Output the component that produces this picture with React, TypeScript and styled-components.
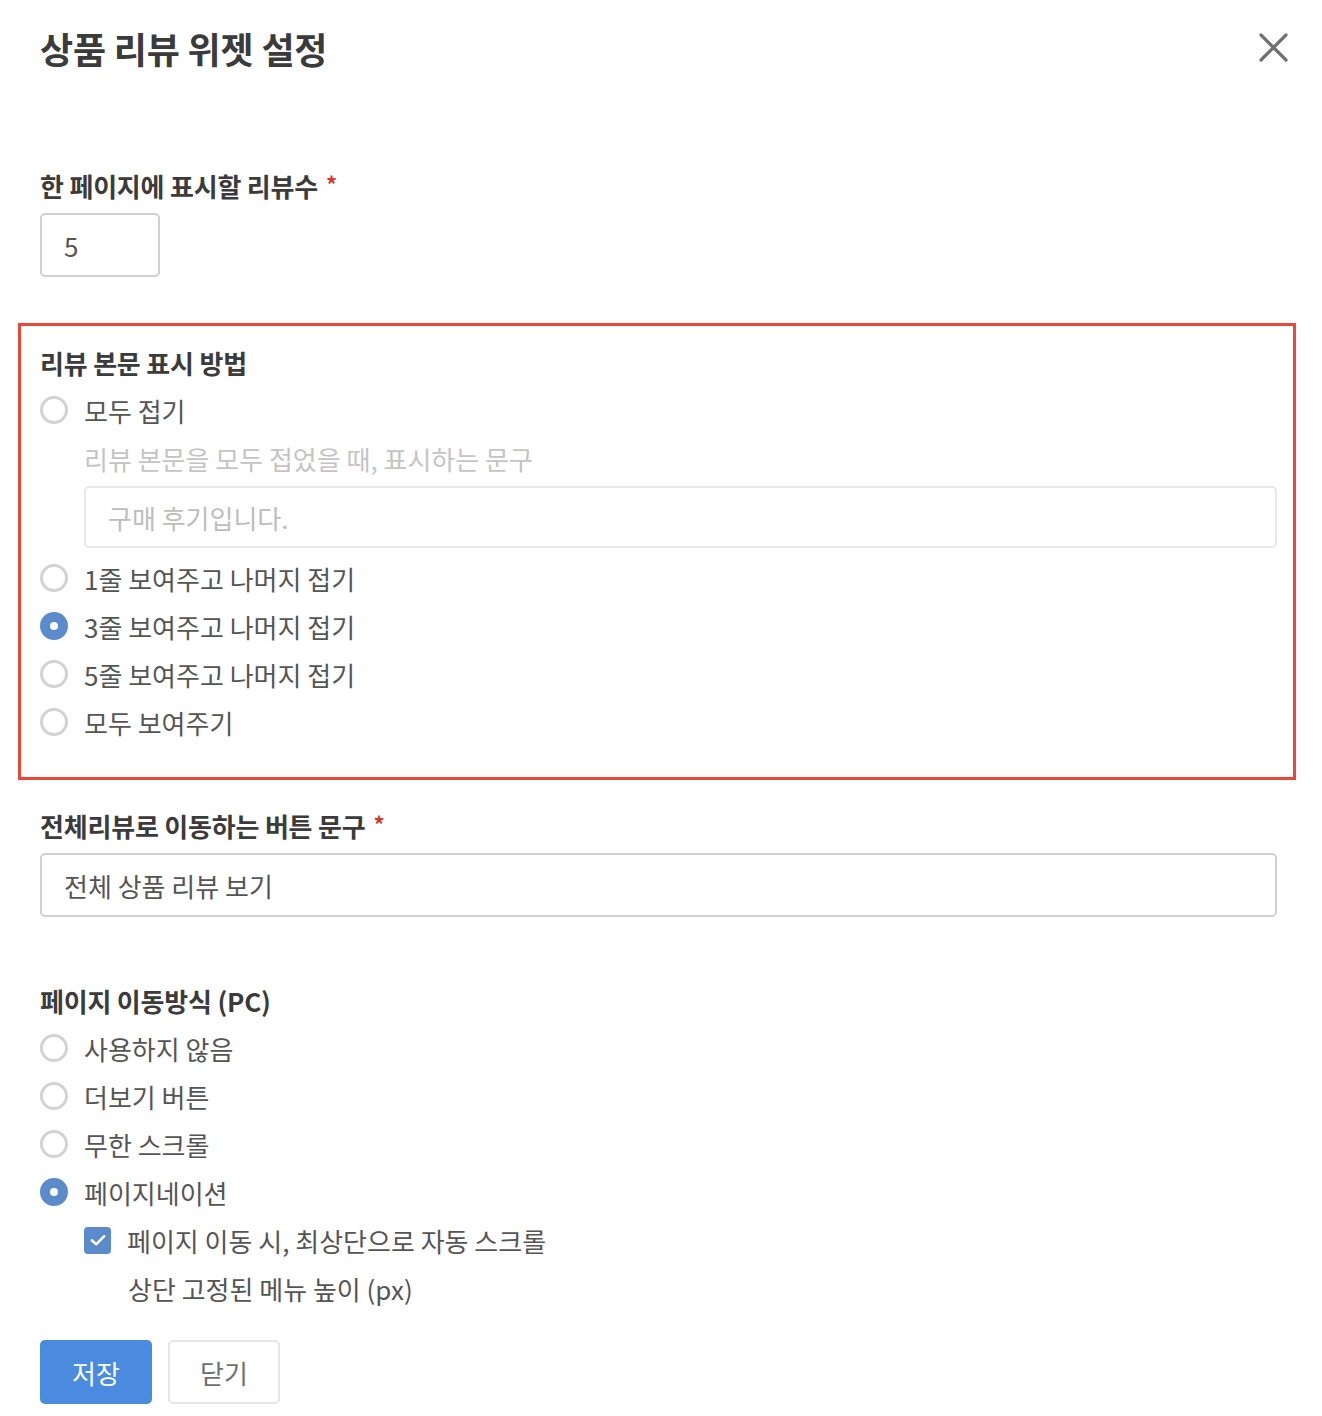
import styled, { createGlobalStyle } from "styled-components";
import { useState } from "react";

const GlobalStyle = createGlobalStyle`
  body {
    margin: 0;
    background: #fff;
    font-family: 'Noto Sans CJK KR', 'Noto Sans', sans-serif;
  }
  * { box-sizing: border-box; }
`;

const contentOptions = [
  { name: "fold", text: "모두 접기" },
  { name: "line1", text: "1줄 보여주고 나머지 접기" },
  { name: "line3", text: "3줄 보여주고 나머지 접기" },
  { name: "line5", text: "5줄 보여주고 나머지 접기" },
  { name: "all", text: "모두 보여주기" },
];

const pageOptions = [
  { name: "none", text: "사용하지 않음" },
  { name: "more", text: "더보기 버튼" },
  { name: "infinite", text: "무한 스크롤" },
  { name: "pagination", text: "페이지네이션" },
];

const App = () => {
  const [content, setContent] = useState("line3");
  const [paging, setPaging] = useState("pagination");
  const [autoScroll, setAutoScroll] = useState(true);

  return (
    <Page>
      <GlobalStyle />
      <Header>
        <Title>상품 리뷰 위젯 설정</Title>
        <CloseButton aria-label="닫기">
          <svg width="34" height="34" viewBox="0 0 34 34">
            <path d="M5 4 L30 29 M30 4 L5 29" stroke="#707070" strokeWidth="3.2" strokeLinecap="round" />
          </svg>
        </CloseButton>
      </Header>

      <Label style={{ marginTop: 65 }}>
        한 페이지에 표시할 리뷰수 <Star>*</Star>
      </Label>
      <Input width="120px" defaultValue="5" />

      <Highlight>
        <Label>리뷰 본문 표시 방법</Label>
        {contentOptions.map((opt) => (
          <div key={opt.name}>
            <OptionRow onClick={() => setContent(opt.name)}>
              <Radio checked={content === opt.name} />
              <OptionText>{opt.text}</OptionText>
            </OptionRow>
            {opt.name === "fold" && (
              <SubBlock>
                <Hint>리뷰 본문을 모두 접었을 때, 표시하는 문구</Hint>
                <Input light placeholder="구매 후기입니다." />
              </SubBlock>
            )}
          </div>
        ))}
      </Highlight>

      <Label style={{ marginTop: 21 }}>
        전체리뷰로 이동하는 버튼 문구 <Star>*</Star>
      </Label>
      <Input defaultValue="전체 상품 리뷰 보기" />

      <Label style={{ marginTop: 59 }}>페이지 이동방식 (PC)</Label>
      {pageOptions.map((opt) => (
        <OptionRow key={opt.name} onClick={() => setPaging(opt.name)}>
          <Radio checked={paging === opt.name} />
          <OptionText>{opt.text}</OptionText>
        </OptionRow>
      ))}
      <SubBlock>
        <OptionRow onClick={() => setAutoScroll(!autoScroll)}>
          <Checkbox checked={autoScroll}>
            {autoScroll && (
              <svg width="18" height="18" viewBox="0 0 16 16">
                <path d="M2.5 8.2 L6.4 11.8 L13.5 4.5" stroke="#fff" strokeWidth="2.2" fill="none" strokeLinecap="round" strokeLinejoin="round" />
              </svg>
            )}
          </Checkbox>
          <OptionText>페이지 이동 시, 최상단으로 자동 스크롤</OptionText>
        </OptionRow>
        <SubLabel>상단 고정된 메뉴 높이 (px)</SubLabel>
      </SubBlock>

      <Buttons>
        <Button primary>저장</Button>
        <Button>닫기</Button>
      </Buttons>
    </Page>
  );
};

const Page = styled.div`
  width: 1322px;
  padding: 0 45px 12px 40px;
  color: #555;
`;

const Header = styled.div`
  display: flex;
  justify-content: space-between;
  align-items: center;
  height: 96px;
`;

const Title = styled.h1`
  margin: 0;
  font-size: 36px;
  font-weight: 700;
  letter-spacing: -0.2px;
  color: #3b3b3b;
`;

const CloseButton = styled.button`
  border: none;
  background: none;
  padding: 0;
  margin-right: -13px;
  display: flex;
  cursor: pointer;
`;

const Label = styled.div`
  height: 48px;
  display: flex;
  align-items: center;
  font-size: 26px;
  font-weight: 700;
  letter-spacing: -0.2px;
  color: #3b3b3b;
`;

const Star = styled.span`
  color: #d33a2c;
  margin-left: 8px;
  font-size: 22px;
  align-self: flex-start;
  margin-top: 6px;
`;

const Input = styled.input<{ width?: string; light?: boolean }>`
  display: block;
  width: ${(p) => p.width || "100%"};
  height: ${(p) => (p.light ? "62px" : "64px")};
  margin: 4px 0 ${(p) => (p.light ? "6px" : "0")};
  padding: 0 22px;
  border: 2px solid ${(p) => (p.light ? "#e8e8e8" : "#d0d0d0")};
  border-radius: 5px;
  font-family: inherit;
  font-size: 26px;
  color: #555;
  outline: none;

  &::placeholder {
    color: #bdbdbd;
  }
`;

const Highlight = styled.section`
  margin: 46px -19px 0 -22px;
  padding: 12px 16px 31px 19px;
  border: 3px solid #ea4a35;
`;

const OptionRow = styled.label`
  height: 48px;
  display: flex;
  align-items: center;
  cursor: pointer;
`;

const Radio = styled.span<{ checked: boolean }>`
  width: 28px;
  height: 28px;
  border-radius: 50%;
  flex-shrink: 0;
  background: ${(p) => (p.checked ? "#5b8bcb" : "#fff")};
  border: ${(p) => (p.checked ? "none" : "3px solid #d3d3d3")};
  display: flex;
  align-items: center;
  justify-content: center;

  &::after {
    content: "";
    display: ${(p) => (p.checked ? "block" : "none")};
    width: 8px;
    height: 8px;
    border-radius: 50%;
    background: #fff;
  }
`;

const Checkbox = styled.span<{ checked: boolean }>`
  width: 27px;
  height: 27px;
  border-radius: 4px;
  flex-shrink: 0;
  background: ${(p) => (p.checked ? "#5b8bcb" : "#fff")};
  border: ${(p) => (p.checked ? "none" : "3px solid #d3d3d3")};
  display: flex;
  align-items: center;
  justify-content: center;
`;

const OptionText = styled.span`
  margin-left: 16px;
  font-size: 26px;
  color: #555;
`;

const SubBlock = styled.div`
  padding-left: 44px;
`;

const Hint = styled.div`
  height: 48px;
  display: flex;
  align-items: center;
  font-size: 26px;
  color: #c4c4c4;
`;

const SubLabel = styled.div`
  height: 48px;
  display: flex;
  align-items: center;
  padding-left: 44px;
  font-size: 26px;
  color: #555;
`;

const Buttons = styled.div`
  display: flex;
  gap: 16px;
  margin-top: 28px;
`;

const Button = styled.button<{ primary?: boolean }>`
  width: 112px;
  height: 64px;
  border-radius: 5px;
  font-family: inherit;
  font-size: 26px;
  cursor: pointer;
  background: ${(p) => (p.primary ? "#4a8be0" : "#fff")};
  color: ${(p) => (p.primary ? "#fff" : "#6f6f6f")};
  border: ${(p) => (p.primary ? "none" : "2px solid #e6e6e6")};
`;

export default App;
